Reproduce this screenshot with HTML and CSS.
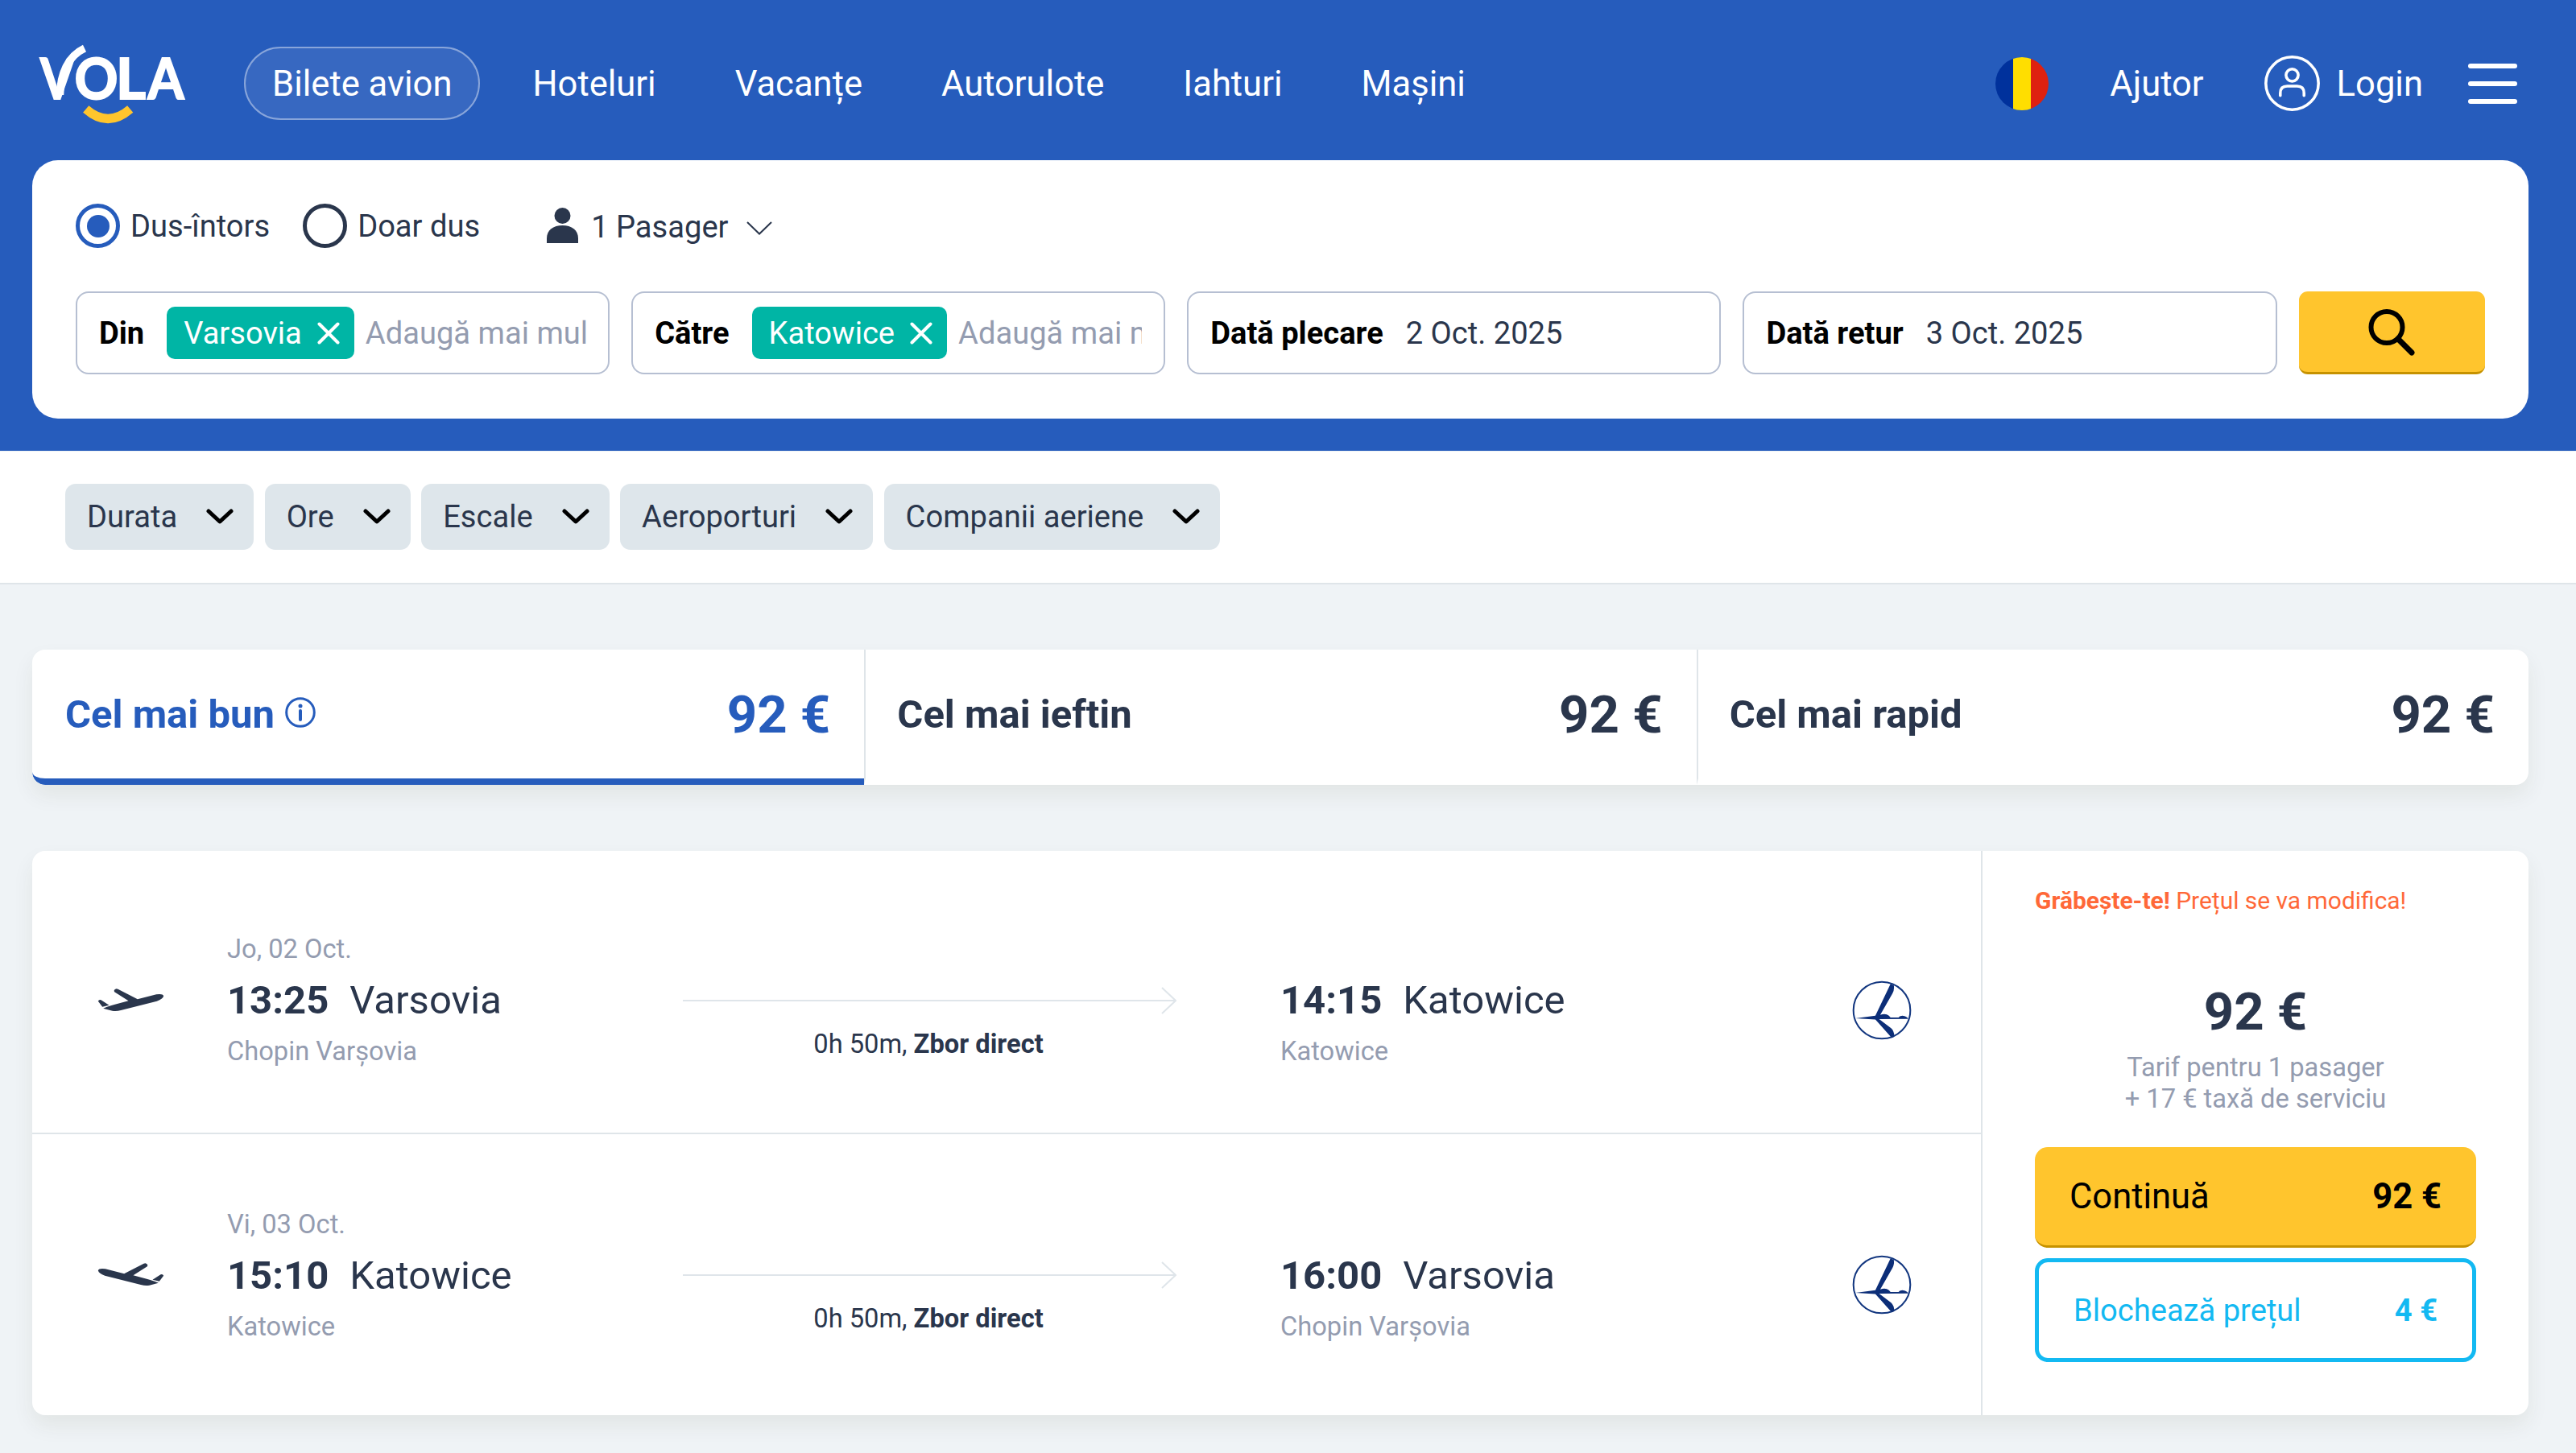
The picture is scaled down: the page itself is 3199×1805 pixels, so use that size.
FILE: index.html
```html
<!DOCTYPE html>
<html lang="ro">
<head>
<meta charset="utf-8">
<title>Vola - Bilete avion</title>
<link rel="stylesheet" href="styles.css">
</head>
<body>
<svg class="defs" width="0" height="0" aria-hidden="true">
  <symbol id="plane" viewBox="64 84 246 87">
    <path d="M84 158Q100 151 128 143L178 130L126 97Q121 88 133 84.500L139 86L212 124L282 106Q306 102 309 112Q306 124 284 131L150 165Q132 170 118 167Z"/>
    <path d="M65 131Q69 123 76 127L106 146L81 152Z"/>
  </symbol>
  <symbol id="lot" viewBox="62 54 220 220">
    <circle cx="172" cy="164" r="105" fill="none" stroke="#12367f" stroke-width="6"/>
    <path fill="#0c2e78" d="M75 194L148 184L204 67L216 72Q219 88 211 102L166 181Q186 174 198 184L204 191L234 191L238 186L248 184L258 186L266 191L269 196L162 197L206 230Q219 242 217 262L207 264L148 198Z"/>
  </symbol>
  <symbol id="chev" viewBox="0 0 34 20">
    <path d="M3 3L17 16L31 3" fill="none" stroke="#000" stroke-width="5" stroke-linecap="round" stroke-linejoin="round"/>
  </symbol>
  <symbol id="close" viewBox="0 0 28 28">
    <path d="M2.500 2.500L25.500 25.500M25.500 2.500L2.500 25.500" stroke="#fff" stroke-width="4" stroke-linecap="round"/>
  </symbol>
  <symbol id="arrow" viewBox="0 0 613 34">
    <path d="M0 17H612M595 1L612 17L595 33" fill="none" stroke="#dfe5ea" stroke-width="2"/>
  </symbol>
</svg>

<header class="top">
  <nav class="nav">
    <svg class="logo" viewBox="0 0 180 98">
      <g class="wordmark">
        <text x="0" y="68.500" textLength="42" lengthAdjust="spacingAndGlyphs">V</text>
        <text x="42.500" y="68.500" textLength="54" lengthAdjust="spacingAndGlyphs">O</text>
        <text x="94" y="68.500" textLength="37" lengthAdjust="spacingAndGlyphs">L</text>
        <text x="133.500" y="68.500" textLength="45" lengthAdjust="spacingAndGlyphs">A</text>
      </g>
      <path d="M24.500 64C25 38 34 16 55 6" fill="none" stroke="#fff" stroke-width="9.500"/>
      <path d="M56.700 81.500Q84 105.500 111.700 81.500" fill="none" stroke="#ffc52d" stroke-width="11"/>
    </svg>
    <div class="links">
      <a class="active">Bilete avion</a><a>Hoteluri</a><a>Vacanțe</a><a>Autorulote</a><a>Iahturi</a><a>Mașini</a>
    </div>
    <div class="account">
      <svg class="flag" viewBox="0 0 66 66"><clipPath id="disc"><circle cx="33" cy="33" r="33"/></clipPath><g clip-path="url(#disc)"><path fill="#00319c" d="M0 0H22V66H0Z"/><path fill="#ffde00" d="M22 0H44V66H22Z"/><path fill="#de2110" d="M44 0H66V66H44Z"/></g></svg>
      <span class="help">Ajutor</span>
      <svg class="user" viewBox="0 0 68 68" fill="none" stroke="#fff" stroke-width="3.500"><circle cx="34" cy="34" r="32.200"/><circle cx="34" cy="24" r="7.500"/><path d="M19.500 49V46Q19.500 37.500 28 37.500H40Q48.500 37.500 48.500 46V49" stroke-linecap="round"/></svg>
      <span>Login</span>
      <div class="burger"><i></i><i></i><i></i></div>
    </div>
  </nav>

  <section class="search">
    <div class="options">
      <span class="radio on"></span><span class="opt">Dus-întors</span>
      <span class="radio"></span><span class="opt">Doar dus</span>
      <span class="pax">
        <svg class="person" viewBox="0 0 39 44" fill="#2a364c"><circle cx="19.500" cy="10" r="10"/><path d="M0 44V38C0 28 8 22 19.500 22S39 28 39 38V44Z"/></svg>
        1 Pasager
        <svg class="thin" viewBox="0 0 32 17"><path d="M1 1L16 15.500L31 1" fill="none" stroke="#2a364c" stroke-width="2"/></svg>
      </span>
    </div>
    <div class="fields">
      <div class="field"><b>Din</b><span class="chip">Varsovia<svg><use href="#close"/></svg></span><span class="hint">Adaugă mai multe</span></div>
      <div class="field"><b>Către</b><span class="chip">Katowice<svg><use href="#close"/></svg></span><span class="hint">Adaugă mai multe</span></div>
      <div class="field"><b>Dată plecare</b><span>2 Oct. 2025</span></div>
      <div class="field"><b>Dată retur</b><span>3 Oct. 2025</span></div>
      <button class="go"><svg viewBox="0 0 58 58" fill="none" stroke="#000"><circle cx="23" cy="22.500" r="19.500" stroke-width="6"/><path d="M37 37L54 54" stroke-width="7" stroke-linecap="round"/></svg></button>
    </div>
  </section>
</header>

<div class="filters">
  <span>Durata<svg><use href="#chev"/></svg></span>
  <span>Ore<svg><use href="#chev"/></svg></span>
  <span>Escale<svg><use href="#chev"/></svg></span>
  <span>Aeroporturi<svg><use href="#chev"/></svg></span>
  <span>Companii aeriene<svg><use href="#chev"/></svg></span>
</div>

<main>
  <div class="tabs">
    <div class="tab selected"><h2>Cel mai bun</h2><svg viewBox="0 0 38 38"><circle cx="19" cy="19" r="17.300" fill="none" stroke="#265cbc" stroke-width="3"/><circle cx="19" cy="11" r="2.500" fill="#265cbc"/><path d="M19 17V28" stroke="#265cbc" stroke-width="4" stroke-linecap="round"/></svg><strong>92 €</strong></div>
    <div class="tab"><h2>Cel mai ieftin</h2><strong>92 €</strong></div>
    <div class="tab"><h2>Cel mai rapid</h2><strong>92 €</strong></div>
  </div>

  <article class="offer">
    <div class="legs">
      <div class="leg">
        <svg class="plane"><use href="#plane"/></svg>
        <div class="stop from"><small>Jo, 02 Oct.</small><p><b>13:25</b>Varsovia</p><small>Chopin Varșovia</small></div>
        <div class="path"><svg><use href="#arrow"/></svg><p>0h 50m, <b>Zbor direct</b></p></div>
        <div class="stop to"><p><b>14:15</b>Katowice</p><small>Katowice</small></div>
        <svg class="carrier"><use href="#lot"/></svg>
      </div>
      <div class="leg back">
        <svg class="plane"><use href="#plane"/></svg>
        <div class="stop from"><small>Vi, 03 Oct.</small><p><b>15:10</b>Katowice</p><small>Katowice</small></div>
        <div class="path"><svg><use href="#arrow"/></svg><p>0h 50m, <b>Zbor direct</b></p></div>
        <div class="stop to"><p><b>16:00</b>Varsovia</p><small>Chopin Varșovia</small></div>
        <svg class="carrier"><use href="#lot"/></svg>
      </div>
    </div>
    <aside class="buy">
      <p class="hurry"><b>Grăbește-te!</b> Prețul se va modifica!</p>
      <strong class="price">92 €</strong>
      <p class="note">Tarif pentru 1 pasager<br>+ 17 € taxă de serviciu</p>
      <div class="btn primary"><span>Continuă</span><b>92 €</b></div>
      <div class="btn lock"><span>Blochează prețul</span><b>4 €</b></div>
    </aside>
  </article>
</main>
</body>
</html>
```
FILE: styles.css
```css
* { box-sizing: border-box; margin: 0; padding: 0; }
html, body { height: 1805px; overflow: hidden; }
body { font: 38.110px/44px Roboto, "Liberation Sans", sans-serif; color: #2a364c; background: #eff3f6; }
svg { display: block; flex: none; }
.defs { position: absolute; }
b, strong { font-weight: 700; }

.top { height: 560px; background: #265cbc; }
.nav { display: flex; align-items: center; height: 199px; padding: 8px 73px 0 50px; color: #fff; font-size: 43.560px; }
.logo { width: 180px; height: 98px; margin-top: -2px; overflow: visible; }
.wordmark { font: 700 70px Lato, sans-serif; fill: #fff; stroke: #fff; stroke-width: 2px; }
.links { display: flex; gap: 28px; margin-left: 73px; }
.links a { height: 91px; line-height: 89px; padding: 0 33px; border: 2px solid transparent; border-radius: 46px; }
.links .active { margin-right: 2px; background: rgba(255,255,255,.08); border-color: #88a5da; }
.account { display: flex; align-items: center; margin-left: auto; }
.account span { padding-top: 2px; }
.flag { width: 66px; height: 66px; margin-right: 76px; }
.help { margin-right: 75px; }
.user { width: 69px; height: 69px; margin-right: 21px; }
.burger { display: flex; flex-direction: column; gap: 16px; width: 61px; margin-left: 56px; }
.burger i { height: 6px; border-radius: 3px; background: #fff; }

.search { height: 321px; margin: 0 59px 0 40px; padding: 54px 54px 0; border-radius: 32px; background: #fff; }
.options { display: flex; align-items: center; height: 55px; }
.radio { display: grid; place-items: center; width: 55px; height: 55px; border: 5px solid #2a364c; border-radius: 50%; }
.radio.on { border-color: #265cbc; }
.radio.on::after { content: ""; width: 28px; height: 28px; border-radius: 50%; background: #265cbc; }
.opt { padding: 0 41px 0 13px; }
.pax { display: flex; align-items: center; margin: 2px 0 0 42px; }
.person { width: 39px; height: 44px; margin-right: 16px; margin-top: -3px; }
.thin { width: 32px; height: 17px; margin-left: 22px; margin-top: 3px; }
.fields { display: grid; grid-template-columns: repeat(4, 1fr) 231.500px; gap: 27px; margin-top: 54px; }
.field { display: flex; align-items: center; height: 103px; padding: 0 27px; border: 2px solid #b6bfd2; border-radius: 16px; white-space: nowrap; overflow: hidden; }
.field b { margin-right: 28px; color: #000; }
.chip { display: flex; align-items: center; height: 65px; padding: 0 18px 0 21px; border-radius: 10px; background: #00b5a5; color: #fff; }
.chip svg { width: 28px; height: 28px; margin-left: 19px; }
.hint { flex: 1; min-width: 0; margin-left: 14px; overflow: hidden; color: #949cb0; }
.go { display: grid; place-items: center; height: 103px; border: 0; border-bottom: 3px solid #c69200; border-radius: 11px; background: #ffc52d; }
.go svg { width: 58px; height: 58px; margin-top: 2px; }

.filters { display: flex; gap: 13.500px; height: 166px; padding: 40px 81px 0; border-top: 1px solid #eff3f6; border-bottom: 2px solid #dfe5e9; background: #fff; }
.filters span { display: flex; align-items: center; height: 82px; padding: 0 25px 0 27px; border-radius: 13px; background: #dee6eb; }
.filters svg { width: 34px; height: 20px; margin-left: 36px; }

main { padding: 81px 59px 0 40px; }
.tabs { display: grid; grid-template-columns: repeat(3, 1fr); height: 168px; border-radius: 16px; background: #fff; box-shadow: 0 13px 27px rgba(51,51,0,.07); overflow: hidden; }
.tab { display: flex; align-items: center; padding: 0 42px 0 39px; border-left: 2px solid #dfe5e9; border-bottom: 8px solid transparent; }
.tabs, .tab { background-clip: padding-box; }
.tab.selected { padding-left: 41px; border-left: 0; color: #265cbc; border-bottom-color: #265cbc; border-radius: 0 0 0 16px; }
.tab h2 { font-size: 49px; font-weight: 700; padding-top: 1px; }
.tab svg { width: 38px; height: 38px; margin-left: 13px; margin-top: -4px; }
.tab strong { margin-left: auto; font-size: 65.300px; padding-top: 1px; }

.offer { display: flex; height: 701px; margin-top: 82px; border-radius: 16px; background: #fff; box-shadow: 0 13px 27px rgba(51,51,0,.07); }
.legs { flex: 1; border-right: 2px solid #dfe5e9; }
.leg { display: flex; height: 352px; padding: 99px 0 0 81px; border-bottom: 2px solid #dfe5e9; }
.leg.back { height: 349px; padding-top: 88px; border-bottom: 0; }
.plane { width: 83px; height: 29px; margin-top: 72px; fill: #2a364c; }
.back .plane { transform: scaleX(-1); }
.stop small { display: block; font-size: 32.670px; line-height: 44px; color: #949cb0; }
.stop p { margin: 11px 0 10px; font-size: 49px; line-height: 62px; }
.stop p b { margin-right: 26px; }
.from { width: 566px; margin-left: 78px; padding-top: 1px; }
.path { width: 613px; margin-top: 70px; text-align: center; font-size: 32.670px; }
.path svg { width: 613px; height: 34px; }
.path p { margin: 15px 3px 0 0; }
.to { width: 710px; margin-left: 129px; padding-top: 45px; }
.back .stop { margin-top: 1px; }
.carrier { width: 74px; height: 74px; margin-top: 62px; }

.buy { width: 678px; padding: 40px 65px 0; }
.hurry { font-size: 29.940px; color: #ff6838; }
.price { display: block; margin-top: 78px; font-size: 65.300px; line-height: 76px; text-align: center; }
.note { margin-top: 12px; font-size: 32.670px; line-height: 39px; text-align: center; color: #949cb0; }
.btn { display: flex; align-items: center; justify-content: space-between; border-radius: 16px; }
.primary { height: 125px; margin-top: 40px; padding: 2px 43px 0; border-bottom: 3px solid #c69200; background: #ffc52d; color: #000; font-size: 43.560px; }
.lock { height: 129px; margin-top: 13px; padding: 0 43px; border: 5px solid #13b9f2; color: #13b9f2; }
```
